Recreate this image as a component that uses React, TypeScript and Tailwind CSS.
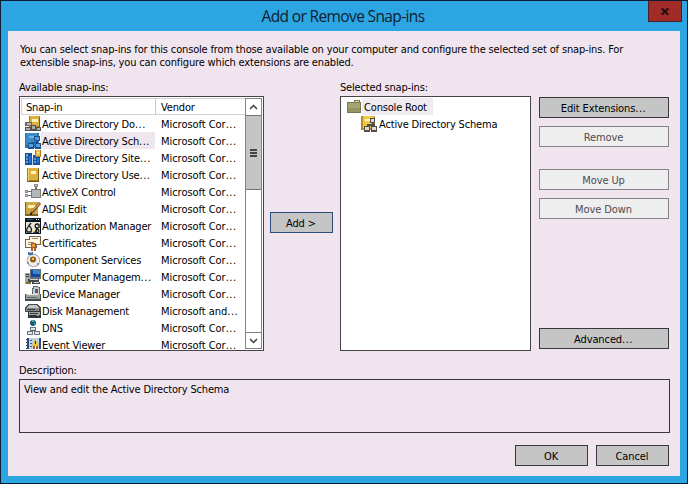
import React from "react";

type IconProps = { className?: string };

function Svg({ children, className = "" }: { children: React.ReactNode; className?: string }) {
  return (
    <svg viewBox="0 0 16 16" width="16" height="16" className={"mt-px shrink-0 " + className} shapeRendering="crispEdges">
      {children}
    </svg>
  );
}

function DomainsIcon() {
  return (
    <Svg>
      <path d="M4 0h11v12H4z" fill="#a87c1c" />
      <path d="M5 0h9v10H5z" fill="#dcb03a" />
      <path d="M7 3h6v3H7z" fill="#fff3b8" />
      <path d="M0 6h7v4H0z" fill="#6d675c" />
      <path d="M2 7h4v2H2z" fill="#b8b6b0" />
      <path d="M0 11h6v4H0zM6 9h5v6H6zM11 11h5v4h-5z" fill="#55514a" />
      <path d="M1 12h4v2H1zM7 10h3v3H7zM12 12h3v2h-3z" fill="#a9abae" />
      <path d="M14 2h1v9h-1z" fill="#7b5d12" />
    </Svg>
  );
}

function SchemaIcon({ className = "" }: IconProps) {
  return (
    <Svg className={className}>
      <path d="M0 0h14v14H0z" fill="#b98d24" />
      <path d="M2 0h11v12H2z" fill="#edc94c" />
      <path d="M4 3h5v2H4z" fill="#fff4bd" />
      <path d="M9 2h5v5H9zM3 10h6v6H3zM10 10h6v6h-6z" fill="#514e48" />
      <path d="M11 7h2v2h-2zM6 8h8v2H6z" fill="#514e48" />
      <path d="M10 3h3v3h-3zM4 11h4v3H4zM11 11h4v3h-4z" fill="#d8dce2" />
    </Svg>
  );
}

function SchemaSelectedIcon() {
  return (
    <Svg>
      <path d="M0 0h14v15H0z" fill="#2a72b4" />
      <path d="M1 0h11v12H1z" fill="#3e8cc8" />
      <path d="M4 3h5v2H4z" fill="#74b6de" />
      <path d="M9 3h6v5H9zM3 10h6v6H3zM10 10h6v6h-6zM11 8h1v3h-1zM6 9h7v1H6z" fill="#1a5390" />
      <path d="M10 4h4v3h-4zM4 11h4v3H4zM11 11h4v3h-4z" fill="#559fd2" />
    </Svg>
  );
}

function SitesIcon() {
  return (
    <Svg>
      <path d="M0 3h7v12H0zM8 5h7v10H8z" fill="#174fa2" />
      <path d="M1 4h2v3H1zM1 8h2v2H1zM1 11h2v2H1zM9 8h2v2H9zM9 11h2v2H9z" fill="#4da2e0" />
      <path d="M4 6h2v7H4zM12 8h2v5h-2z" fill="#2a73c2" />
      <path d="M7 8h1v7H7z" fill="#c7d9e8" />
      <path d="M10 0h6v7h-6z" fill="#a87a18" />
      <path d="M11 0h4v6h-4z" fill="#e8c454" />
      <path d="M12 2h2v1h-2z" fill="#fff3bd" />
    </Svg>
  );
}

function UsersIcon() {
  return (
    <Svg>
      <path d="M2 1h12v14H2z" fill="#a67818" />
      <path d="M3 1h10v12H3z" fill="#dbb040" />
      <path d="M3 1h1v13H3z" fill="#f3d56b" />
      <path d="M6 4h5v3H6z" fill="#fff3b8" />
      <path d="M2 14h12v1H2zM13 2h1v12h-1z" fill="#76570c" />
    </Svg>
  );
}

function ActiveXIcon() {
  return (
    <Svg>
      <path d="M6 5h10v9H6z" fill="#777b7e" />
      <path d="M7 6h8v7H7z" fill="#b3b7b9" />
      <path d="M10 2h2v4h-2zM3 7h4v1H3zM3 11h4v1H3z" fill="#6d7174" />
      <path d="M9 0h4v3H9zM0 6h3v3H0zM0 10h3v3H0z" fill="#858b8f" />
      <path d="M10 1h2v1h-2zM1 7h1v1H1zM1 11h1v1H1z" fill="#c9cdcf" />
    </Svg>
  );
}

function AdsiIcon() {
  return (
    <Svg>
      <path d="M0 1h13v14H0z" fill="#7f6120" />
      <path d="M1 1h12v12H1z" fill="#cba945" />
      <path d="M3 4h7v3H3z" fill="#fff0ae" />
      <path d="m14 1 2 2-8 9-3 2 1-4z" fill="#65441a" shapeRendering="auto" />
      <path d="m14 2 1 1-8 8-1-1z" fill="#e3a64a" shapeRendering="auto" />
      <path d="M5 12h2v2H5z" fill="#292721" />
    </Svg>
  );
}

function AuthorizationIcon() {
  return (
    <Svg>
      <path d="M0 0h16v16H0z" fill="#0a1420" />
      <path d="M1 4h14v11H1z" fill="#e7e6d5" />
      <path d="M2 1h6v1H2z" fill="#3a568a" />
      <path d="M11 1h1v1h-1zM13 1h1v1h-1z" fill="#fff" />
      <g shapeRendering="auto" fill="none" stroke="#15191c" strokeWidth="1.3">
        <path d="M6 5 3.5 8M4 8C1.5 10 1.5 12 2 14h4c1-3 0-5-2-6Z" />
        <circle cx="12.2" cy="8" r="2" />
        <path d="M12 10v4H8" />
        <circle cx="12.3" cy="13" r="1.6" />
      </g>
      <path d="M12 7h1v1h-1zM12 12h1v2h-1zM8 13h2v1H8z" fill="#e0b921" />
    </Svg>
  );
}

function CertificatesIcon() {
  return (
    <Svg>
      <path d="M4 1h12v9H4zM0 4h12v9H0z" fill="#75624a" />
      <path d="M5 2h10v7H5zM1 5h10v7H1z" fill="#fff8e2" />
      <path d="M7 3h6v1H7zM3 7h6v1H3zM3 9h4v1H3z" fill="#a08a63" />
      <path d="M6 8h5v5H6zM6 12h2v4H6zM9 12h2v4H9z" fill="#a45f20" />
      <path d="M7 9h3v3H7z" fill="#e39a36" />
    </Svg>
  );
}

function ComponentIcon() {
  return (
    <Svg>
      <circle cx="8.5" cy="8.5" r="6.8" fill="#a9adb5" shapeRendering="auto" />
      <circle cx="8.5" cy="8.5" r="5.8" fill="#f0ece4" shapeRendering="auto" />
      <circle cx="8" cy="7.5" r="3" fill="#8e5c1b" shapeRendering="auto" />
      <path d="M7 6h2v2H7z" fill="#f7c244" />
      <path d="M3 0h5v3H3z" fill="#466fa7" />
      <path d="M4 0h3v1H4z" fill="#8db5df" />
      <path d="M12 11h2v2h-2zM2 10h2v2H2z" fill="#9399a0" />
    </Svg>
  );
}

function ComputerIcon() {
  return (
    <Svg>
      <path d="M5 0h11v10H5z" fill="#65707a" />
      <path d="M6 1h9v7H6z" fill="#164a98" />
      <path d="M8 1h7v4H8z" fill="#3289cc" />
      <path d="M0 4h5v11H0z" fill="#a8a99e" />
      <path d="M1 5h3v1H1zM1 7h3v1H1z" fill="#3d4548" />
      <path d="M3 10h11v3H3zM7 13h8v2H7z" fill="#404a50" />
      <path d="M5 10h8v1H5zM9 13h5v1H9z" fill="#d4d1c7" />
      <path d="M1 13h5v2H1z" fill="#7e6e38" />
    </Svg>
  );
}

function DeviceIcon() {
  return (
    <Svg>
      <path d="M8 0h5v1h2v10H7V2h1z" fill="#5e6870" />
      <path d="M9 1h4v1h1v8H8V3h1z" fill="#c3cace" />
      <path d="M10 3h3v4h-3z" fill="#52606c" />
      <path d="M0 8h16v7H0z" fill="#454b4d" />
      <path d="M1 8h14v5H1z" fill="#9fa5a5" />
      <path d="M2 8h11v1H2z" fill="#e4e5dc" />
      <path d="M2 11h10v1H2z" fill="#566264" />
      <path d="M12 12h2v1h-2z" fill="#35b565" />
    </Svg>
  );
}

function DiskIcon() {
  return (
    <Svg>
      <path d="M3 1h10l3 4v3h-2v1H0V5z" fill="#4a4c4d" />
      <path d="M4 2h8l2 3H2z" fill="#c5c7c7" />
      <path d="M1 5h13v3H1z" fill="#838889" />
      <path d="M3 8h13v7H3z" fill="#333738" />
      <path d="M4 9h11v3H4z" fill="#a0a4a4" />
      <path d="M5 10h8v1H5zM2 6h8v1H2z" fill="#393d40" />
      <path d="M12 12h2v1h-2z" fill="#9da6a1" />
    </Svg>
  );
}

function DnsIcon() {
  return (
    <Svg>
      <circle cx="8" cy="3" r="3" fill="#1b5675" shapeRendering="auto" />
      <path d="M7 0h2v2H7zM9 3h1v2H9z" fill="#4caa9c" />
      <path d="M5 7h6v4H5zM2 11h6v4H2zM9 11h6v4H9z" fill="#6b7478" />
      <path d="M6 8h4v2H6zM3 12h4v2H3zM10 12h4v2h-4z" fill="#e5e7e2" />
      <path d="M7 10h3v1H7z" fill="#3d4951" />
    </Svg>
  );
}

function EventIcon() {
  return (
    <Svg>
      <path d="M2 1h14v15H2z" fill="#2d4b8a" />
      <path d="M4 1h10v14H4z" fill="#bdd3e8" />
      <path d="M1 2h3v1H1zM1 5h3v1H1zM1 8h3v1H1zM1 11h3v1H1zM1 14h3v1H1z" fill="#343e5d" />
      <path d="M5 3h2v1H5zM5 6h2v1H5zM5 9h2v1H5zM5 12h2v1H5z" fill="#2f63ad" />
      <path d="M10 2 14 9H7z" fill="#ecc42e" shapeRendering="auto" />
      <path d="M10 4h1v3h-1z" fill="#392f0d" />
      <path d="M8 9h5v5H8z" fill="#b35b2b" />
      <path d="M10 9h1v4h-1z" fill="#fff" />
    </Svg>
  );
}

function FolderIcon() {
  return (
    <Svg>
      <path d="M1 3h7V1h6v2h1v11H1z" fill="#77784d" />
      <path d="M9 2h4v1H9z" fill="#e1dfae" />
      <path d="M2 4h12v9H2z" fill="#94945f" />
      <path d="M2 4h12v5H2z" fill="#a3a374" />
    </Svg>
  );
}

const rows = [
  { name: "Active Directory Do...", vendor: "Microsoft Cor...", Icon: DomainsIcon },
  { name: "Active Directory Sch...", vendor: "Microsoft Cor...", Icon: SchemaSelectedIcon, selected: true },
  { name: "Active Directory Site...", vendor: "Microsoft Cor...", Icon: SitesIcon },
  { name: "Active Directory Use...", vendor: "Microsoft Cor...", Icon: UsersIcon },
  { name: "ActiveX Control", vendor: "Microsoft Cor...", Icon: ActiveXIcon },
  { name: "ADSI Edit", vendor: "Microsoft Cor...", Icon: AdsiIcon },
  { name: "Authorization Manager", vendor: "Microsoft Cor...", Icon: AuthorizationIcon },
  { name: "Certificates", vendor: "Microsoft Cor...", Icon: CertificatesIcon },
  { name: "Component Services", vendor: "Microsoft Cor...", Icon: ComponentIcon },
  { name: "Computer Managem...", vendor: "Microsoft Cor...", Icon: ComputerIcon },
  { name: "Device Manager", vendor: "Microsoft Cor...", Icon: DeviceIcon },
  { name: "Disk Management", vendor: "Microsoft and...", Icon: DiskIcon },
  { name: "DNS", vendor: "Microsoft Cor...", Icon: DnsIcon },
  { name: "Event Viewer", vendor: "Microsoft Cor...", Icon: EventIcon },
];

/* Spreads a trailing ellipsis a little wider than the words before it. */
function Label({ text }: { text: string }) {
  if (!text.endsWith("...")) return <>{text}</>;
  return (
    <>
      {text.slice(0, -3)}
      <span className="tracking-[0.5px]">...</span>
    </>
  );
}

function Button({ text, className = "", disabled = false }: { text: string; className?: string; disabled?: boolean }) {
  return (
    <button
      disabled={disabled}
      className={
        "flex h-[21px] shrink-0 items-center justify-center border pt-px pr-px leading-none tracking-[-0.1px] " +
        (disabled ? "border-[#858188] bg-[#efeeef] text-[#4e4b50] " : "bg-[#c5c5c6] text-black ") +
        className
      }
    >
      <span><Label text={text} /></span>
    </button>
  );
}

function Chevron({ down = false }: { down?: boolean }) {
  return (
    <svg width="9" height="6" viewBox="0 0 9 6" fill="none" stroke="#3f3c42" strokeWidth="1.5">
      <path d={down ? "M1 1l3.5 3.5L8 1" : "M1 5l3.5-3.5L8 5"} />
    </svg>
  );
}

function AvailableList() {
  return (
    <div className="flex h-[255px] w-[245px] border border-[#46434a] bg-white p-px">
      <div className="flex min-w-0 flex-1 flex-col">
        <div className="flex h-[17px] shrink-0 border-y border-l border-[#d2d0d3]">
          <div className="w-[134px] border-r border-[#c8c5c9] pl-1 leading-[17px]">Snap-in</div>
          <div className="pl-[5px] leading-[17px]">Vendor</div>
        </div>
        <div className="flex h-[234px] flex-col overflow-hidden">
          {rows.map(({ name, vendor, Icon, selected }) => (
            <div key={name} className="flex h-[17px] shrink-0 pl-1 leading-[19px]">
              <Icon />
              <div className={"h-[17px] w-[114px] pl-px whitespace-nowrap " + (selected ? "bg-[#f0e6ee]" : "")}><Label text={name} /></div>
              <div className="h-[17px] pl-[6px] tracking-[-0.04px] whitespace-nowrap"><Label text={vendor} /></div>
            </div>
          ))}
        </div>
      </div>
      <div className="flex w-[17px] shrink-0 flex-col border border-[#858288]">
        <div className="flex h-4 items-center justify-center"><Chevron /></div>
        <div className="flex h-[75px] flex-col items-center justify-center gap-px border-y border-[#77737a] bg-[#c5c5c6]">
          <div className="h-[2px] w-[7px] bg-[#454248]" />
          <div className="h-[2px] w-[7px] bg-[#454248]" />
          <div className="h-[2px] w-[7px] bg-[#454248]" />
        </div>
        <div className="flex-1" />
        <div className="flex h-4 items-center justify-center border-t border-[#858288]"><Chevron down /></div>
      </div>
    </div>
  );
}

export default function App() {
  return (
    <div className="flex h-[484px] w-[688px] flex-col overflow-hidden border border-[#0b1b32] bg-[#2ca6e3] font-['DejaVu_Sans_Condensed','DejaVu_Sans',sans-serif] text-[11px] tracking-[-0.17px] text-black">
      <header className="flex h-[30px] shrink-0">
        <div className="w-[37px]" />
        <h1 className="flex-1 pt-[3px] text-center font-['Open_Sans',sans-serif] text-[15.5px] leading-6 tracking-[-0.63px] text-[#10202c]">Add or Remove Snap-ins</h1>
        <button className="mr-[5px] flex h-[21px] w-[34px] items-center justify-center border border-t-0 border-[#472130] bg-[#a12c27]" aria-label="Close">
          <svg width="8" height="7" viewBox="0 0 8 7" stroke="#231014" strokeWidth="2"><path d="M.7.2 7.3 6.8M7.3.2.7 6.8" /></svg>
        </button>
      </header>
      <main className="mx-[7px] flex h-[445px] flex-col bg-[#f0e5ee] px-[11px]">
        <p className="h-[49px] shrink-0 pt-3 pl-px leading-[13px] tracking-[-0.16px] whitespace-nowrap">
          You can select snap-ins for this console from those available on your computer and configure the selected set of snap-ins. For
          <br />
          extensible snap-ins, you can configure which extensions are enabled.
        </p>
        <div className="flex h-[271px] shrink-0">
          <section className="w-[245px]">
            <h2 className="h-4 leading-[16px]">Available snap-ins:</h2>
            <AvailableList />
          </section>
          <div className="ml-[6px] pt-[132px]">
            <Button text="Add >" className="w-[63px] border-[#294c7d]" />
          </div>
          <section className="ml-[7px] w-[191px]">
            <h2 className="h-4 leading-[16px]">Selected snap-ins:</h2>
            <div className="h-[255px] border border-[#46434a] bg-white pt-px pl-[5px]">
              <div className="flex h-[17px] leading-[19px]"><FolderIcon /><span className="h-[17px] w-[71px] bg-[#f0ebef] pl-[2px] whitespace-nowrap">Console Root</span></div>
              <div className="flex h-[17px] pl-[15px] leading-[19px]"><SchemaIcon /><span className="pl-[2px] whitespace-nowrap">Active Directory Schema</span></div>
            </div>
          </section>
          <div className="ml-2 flex w-[130px] flex-col pt-[17px] pb-[2px]">
            <Button text="Edit Extensions..." className="border-[#39363d]" />
            <Button text="Remove" disabled className="mt-2" />
            <Button text="Move Up" disabled className="mt-[22px]" />
            <Button text="Move Down" disabled className="mt-2" />
            <Button text="Advanced..." className="mt-auto border-[#39363d]" />
          </div>
        </div>
        <section className="h-[82px] shrink-0">
          <h2 className="h-7 pt-[13px] leading-[14px]">Description:</h2>
          <div className="h-[54px] w-[651px] border border-[#39363d] pt-[3px] pl-1 leading-[14px]">View and edit the Active Directory Schema</div>
        </section>
        <footer className="mt-3 flex justify-end gap-2">
          <Button text="OK" className="w-[73px] border-[#39363d]" />
          <Button text="Cancel" className="w-[73px] border-[#39363d]" />
        </footer>
      </main>
    </div>
  );
}
